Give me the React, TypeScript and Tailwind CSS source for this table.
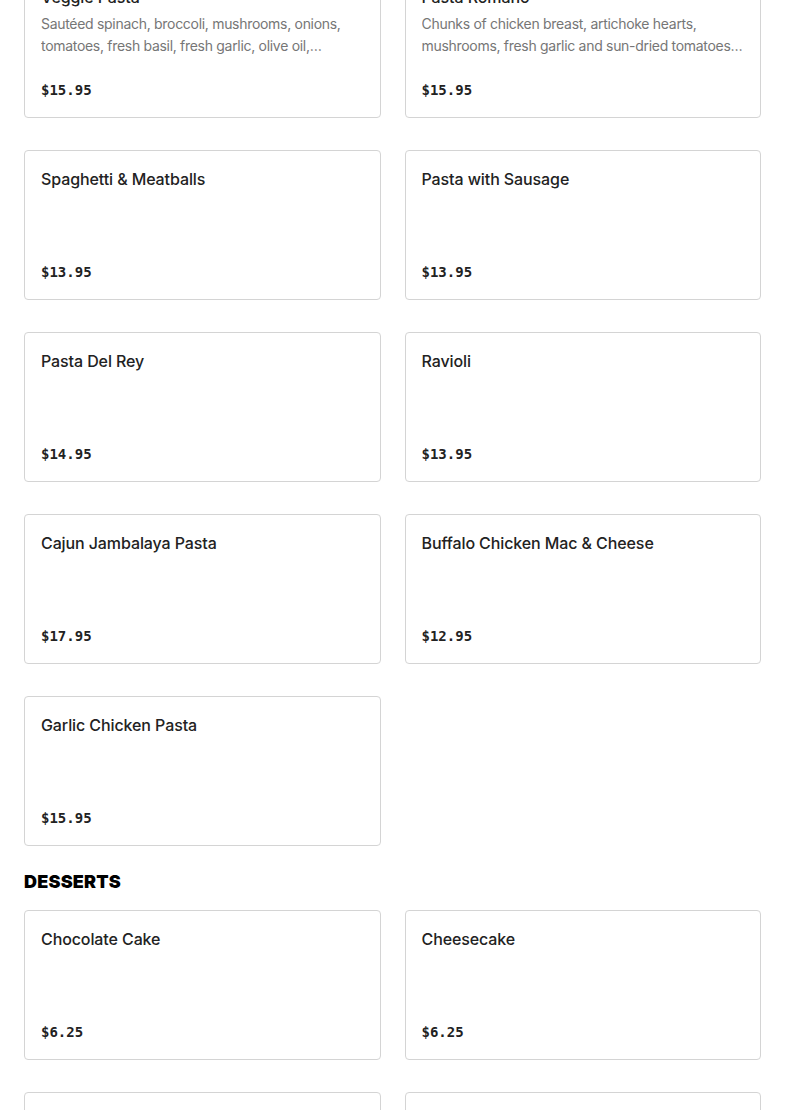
import React from "react";

type Item = { name: string; desc?: string; price: string };

const pasta: Item[] = [
  {
    name: "Veggie Pasta",
    desc: "Sautéed spinach, broccoli, mushrooms, onions, tomatoes, fresh basil, fresh garlic, olive oil, parmesan cheese",
    price: "$15.95",
  },
  {
    name: "Pasta Romano",
    desc: "Chunks of chicken breast, artichoke hearts, mushrooms, fresh garlic and sun-dried tomatoes in a cream sauce",
    price: "$15.95",
  },
  { name: "Spaghetti & Meatballs", price: "$13.95" },
  { name: "Pasta with Sausage", price: "$13.95" },
  { name: "Pasta Del Rey", price: "$14.95" },
  { name: "Ravioli", price: "$13.95" },
  { name: "Cajun Jambalaya Pasta", price: "$17.95" },
  { name: "Buffalo Chicken Mac & Cheese", price: "$12.95" },
  { name: "Garlic Chicken Pasta", price: "$15.95" },
];

const desserts: Item[] = [
  { name: "Chocolate Cake", price: "$6.25" },
  { name: "Cheesecake", price: "$6.25" },
  { name: "Tiramisu", price: "$6.25" },
  { name: "Cannoli Cream Cake", price: "$6.25" },
];

function Card({ item }: { item: Item }) {
  return (
    <div className="flex h-[150px] flex-col justify-between rounded-[4px] border border-[#d4d4d4] bg-white px-4 pt-4 pb-[17px]">
      <div>
        <div className="text-[16px] leading-6 font-medium text-[#222222] tracking-[-0.1px]">
          {item.name}
        </div>
        {item.desc && (
          <div className="mt-1 line-clamp-2 text-[14px] leading-[22px] text-[#767676] tracking-[-0.3px]">
            {item.desc}
          </div>
        )}
      </div>
      <div
        className="text-[14px] leading-5 font-bold text-[#222222]"
        style={{ fontFamily: '"DejaVu Sans Mono", "Liberation Mono", monospace' }}
      >
        {item.price}
      </div>
    </div>
  );
}

export default function App() {
  return (
    <div
      className="min-h-[1110px] bg-white overflow-hidden"
      style={{ fontFamily: 'Inter, "Liberation Sans", sans-serif' }}
    >
      <div className="-mt-[32px] px-6">
        <div className="grid grid-cols-2 gap-x-6 gap-y-8">
          {pasta.map((p) => (
            <Card key={p.name} item={p} />
          ))}
        </div>
        <h2 className="mt-[22px] mb-[14px] text-[18px] leading-7 font-black text-black tracking-[0.2px]">
          DESSERTS
        </h2>
        <div className="grid grid-cols-2 gap-x-6 gap-y-8">
          {desserts.map((p) => (
            <Card key={p.name} item={p} />
          ))}
        </div>
      </div>
    </div>
  );
}
